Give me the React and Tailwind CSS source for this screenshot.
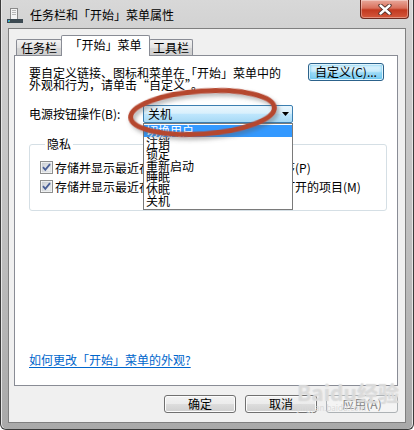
import React from "react";

const btn =
  "h-[18px] w-[72px] flex items-center justify-center rounded-[3px] border text-[12px] leading-[12px]";
const btnNormal =
  "border-[#707070] text-black bg-[linear-gradient(#f2f2f2_0%,#ebebeb_50%,#dddddd_51%,#cfcfcf_100%)] shadow-[inset_0_0_0_1px_#fcfcfc]";

const powerOptions = ["切换用户", "注销", "锁定", "重新启动", "睡眠", "休眠", "关机"];

const Checkbox = () => (
  <svg width="13" height="13" viewBox="0 0 13 13" className="shrink-0">
    <defs>
      <linearGradient id="cbg" x1="0" y1="0" x2="1" y2="1">
        <stop offset="0" stopColor="#cbcfd5" />
        <stop offset="1" stopColor="#f6f6f6" />
      </linearGradient>
    </defs>
    <rect x="0.5" y="0.5" width="12" height="12" fill="#fff" stroke="#8e8f8f" />
    <rect x="2" y="2" width="9" height="9" fill="url(#cbg)" stroke="#c4c8cc" strokeWidth="0.6" />
    <path d="M3 6.2 L5.3 8.8 L10 3.2" fill="none" stroke="#4a5f97" strokeWidth="1.8" />
  </svg>
);

const TaskbarIcon = () => (
  <svg width="16" height="16" viewBox="0 0 16 16" className="shrink-0">
    <rect x="3.5" y="1.5" width="7" height="11" fill="#f4f4f4" stroke="#8a8a8a" />
    <rect x="5" y="3" width="4" height="1" fill="#b8b8b8" />
    <rect x="5" y="5" width="4" height="1" fill="#b8b8b8" />
    <rect x="5" y="7" width="4" height="1" fill="#b8b8b8" />
    <rect x="0" y="12" width="16" height="4" fill="#3d4a52" />
    <rect x="1" y="13" width="2" height="2" fill="#3aa0d8" />
    <rect x="2" y="14" width="1" height="1" fill="#6cc04a" />
  </svg>
);

const CloseX = () => (
  <svg width="14" height="11" viewBox="0 0 14 11">
    <path d="M2.5 1.5 L11.5 9.5 M11.5 1.5 L2.5 9.5" stroke="#4a2a24" strokeWidth="4.2" strokeLinecap="round" />
    <path d="M2.5 1.5 L11.5 9.5 M11.5 1.5 L2.5 9.5" stroke="#ffffff" strokeWidth="2.4" strokeLinecap="round" />
  </svg>
);

export default function App() {
  return (
    <div className="relative w-[414px] h-[430px] overflow-hidden bg-white font-['Noto_Sans_CJK_SC',sans-serif] text-black">
      {/* window frame */}
      <div className="w-full h-full flex flex-col rounded-b-[6px] border border-[#3b3b3b] border-t-0 bg-[linear-gradient(#d8d8d8_0%,#cfcfcf_10%,#bdbdbd_60%,#a9a9a9_100%)] shadow-[inset_1px_0_0_#e6e6e6,inset_-1px_0_0_#e6e6e6]">
        {/* title bar */}
        <div className="h-[28px] flex items-start shrink-0">
          <div className="flex items-center pl-[6px] pt-[7px] gap-[7px]">
            <TaskbarIcon />
            <span className="text-[12px] leading-[16px] text-black">任务栏和「开始」菜单属性</span>
          </div>
          <div className="ml-auto mr-[4px] w-[49px] h-[19px] flex items-center justify-center rounded-b-[4px] border border-t-0 border-[#6b2a1f] bg-[linear-gradient(#e9a99b_0%,#d9705b_45%,#c2391f_55%,#d4583c_100%)] shadow-[inset_0_0_0_1px_rgba(255,255,255,0.35)]">
            <CloseX />
          </div>
        </div>

        {/* client area */}
        <div className="flex-1 mx-[7px] mb-[6px] border border-[#7f7f7f] bg-[#f0f0f0] flex flex-col px-[5px] pt-[6px]">
          {/* tabs */}
          <div className="flex items-end pl-[2px] h-[20px]">
            <div className="w-[46px] h-[16px] flex items-center justify-center border border-b-0 border-[#898c95] rounded-t-[2px] bg-[linear-gradient(#f3f3f3,#e3e3e3_50%,#d6d6d6_51%,#cfcfcf)] text-[12px] leading-[12px] pt-[1px]">
              任务栏
            </div>
            <div className="relative z-10 -ml-px -mb-px w-[89px] h-[21px] flex items-center justify-center border border-b-0 border-[#898c95] rounded-t-[2px] bg-white text-[12px] leading-[12px] pb-[2px]">
              「开始」菜单
            </div>
            <div className="-ml-px w-[44px] h-[16px] flex items-center justify-center border border-b-0 border-[#898c95] rounded-t-[2px] bg-[linear-gradient(#f3f3f3,#e3e3e3_50%,#d6d6d6_51%,#cfcfcf)] text-[12px] leading-[12px] pt-[1px]">
              工具栏
            </div>
          </div>

          {/* tab panel */}
          <div className="w-[384px] h-[331px] border border-[#898c95] bg-white flex flex-col pt-[7px] pl-[14px] pr-[13px] text-[12px] leading-[12px]">
            <div className="flex items-start justify-between">
              <p className="mt-[4px] leading-[12px]">
                要自定义链接、图标和菜单在「开始」菜单中的
                <br />
                外观和行为，请单击“自定义”。
              </p>
              <div className="w-[76px] h-[18px] flex items-center justify-center rounded-[3px] border border-[#2c628b] bg-[linear-gradient(#e5f5fd_0%,#c8ebfb_45%,#9ad9f6_55%,#7ccbf0_100%)] shadow-[inset_0_0_0_1px_#dff3fc,inset_0_0_3px_1px_#5cc4ef] text-[12px] leading-[12px]">
                自定义(C)...
              </div>
            </div>

            <div className="flex items-center mt-[14px] h-[18px]">
              <span className="w-[114px]">电源按钮操作(B):</span>
              <div className="relative z-20 w-[150px] h-[18px]">
                <div className="h-full flex items-center justify-between border border-[#3c7fb1] rounded-[2px] bg-[linear-gradient(#eaf6fd_0%,#d9f0fc_45%,#bee6fd_52%,#a7d9f5_100%)] pl-[4px] pr-[3px]">
                  <span>关机</span>
                  <svg width="7" height="4" viewBox="0 0 7 4">
                    <path d="M0 0 H7 L3.5 4 Z" fill="#000" />
                  </svg>
                </div>
                <div className="absolute left-0 top-full w-[150px] border border-[#7a7a7a] bg-white pt-[1px] pb-[3px]">
                  {powerOptions.map((o, i) => (
                    <div
                      key={o}
                      className={`h-[11.6px] leading-[11.6px] pl-[2px] whitespace-nowrap ${i === 0 ? "bg-[#3399ff] text-white" : "text-black"}`}
                    >
                      {o}
                    </div>
                  ))}
                </div>
              </div>
            </div>

            <fieldset className="mt-[15px] w-[358px] border border-[#d5dfe5] rounded-[3px] pl-[10px] pt-[11px] pb-[17px] flex flex-col gap-[6px]">
              <legend className="ml-[5px] px-[2px] leading-[12px]">隐私</legend>
              <label className="flex items-center gap-[2px] h-[13px] whitespace-nowrap">
                <Checkbox />
                <span>存储并显示最近在「开始」菜单中打开的程序(P)</span>
              </label>
              <label className="flex items-center gap-[2px] h-[13px] whitespace-nowrap">
                <Checkbox />
                <span>存储并显示最近在「开始」菜单和任务栏中打开的项目(M)</span>
              </label>
            </fieldset>

            <a className="mt-[143px] self-start text-[#0066cc] underline underline-offset-2 leading-[12px]">
              如何更改「开始」菜单的外观?
            </a>
          </div>

          {/* buttons */}
          <div className="flex justify-end gap-[9px] mt-[9px] w-[384px]">
            <div className={`${btn} ${btnNormal}`}>确定</div>
            <div className={`${btn} ${btnNormal}`}>取消</div>
            <div className={`${btn} border-[#adb2b5] bg-[#f4f4f4] text-[#838383]`}>应用(A)</div>
          </div>
        </div>
      </div>

      {/* red annotation ellipse */}
      <svg className="absolute left-0 top-0 pointer-events-none z-30" width="414" height="430" viewBox="0 0 414 430">
        <defs>
          <filter id="sh" x="-20%" y="-50%" width="140%" height="200%">
            <feDropShadow dx="2" dy="3" stdDeviation="2" floodColor="#555" floodOpacity="0.45" />
          </filter>
        </defs>
        <ellipse
          cx="202.5"
          cy="112.5"
          rx="72"
          ry="21.5"
          transform="rotate(-4 202.5 112.5)"
          fill="none"
          stroke="#b5462f"
          strokeWidth="5"
          filter="url(#sh)"
        />
      </svg>

      {/* watermark */}
      <div className="absolute left-[297px] top-[381px] z-30 pointer-events-none flex flex-col items-start">
        <span className="text-[21px] leading-[22px] font-bold text-white/40 [text-shadow:0_0_1px_#c4c4c4]">Baidu经验</span>
        <span className="text-[8px] leading-[9px] text-[#dadada]">jingyan.baidu.com</span>
      </div>
    </div>
  );
}
